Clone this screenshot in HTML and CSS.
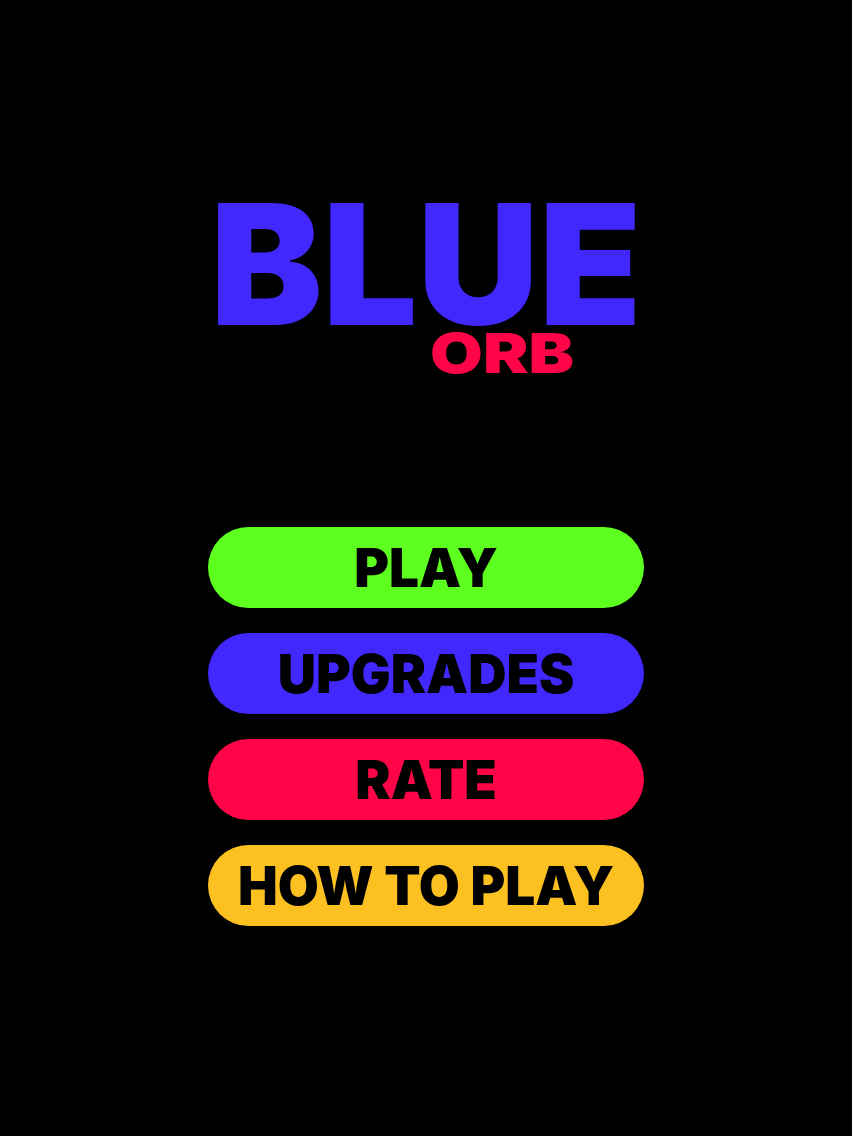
FILE: index.html
```html
<!DOCTYPE html>
<html lang="en">
<head>
<meta charset="utf-8">
<title>Blue Orb</title>
<link rel="stylesheet" href="styles.css">
</head>
<body>
<main class="screen">
  <h1 class="title">
    <span class="title-main">BLUE</span>
    <span class="title-sub">ORB</span>
  </h1>
  <nav class="menu">
    <button class="btn btn-play">PLAY</button>
    <button class="btn btn-upgrades">UPGRADES</button>
    <button class="btn btn-rate">RATE</button>
    <button class="btn btn-how">HOW TO PLAY</button>
  </nav>
</main>
</body>
</html>
```
FILE: styles.css
```css
html, body {
  margin: 0;
  padding: 0;
  background: #000;
}
body {
  width: 852px;
  height: 1136px;
  overflow: hidden;
  font-family: Inter, "Liberation Sans", sans-serif;
}
.screen {
  display: flex;
  flex-direction: column;
  align-items: center;
  padding-top: 189px;
}
.title {
  margin: 0;
  display: flex;
  flex-direction: column;
  align-items: flex-start;
  font-weight: 900;
}
.title-main {
  font-size: 168px;
  line-height: 150px;
  color: #4128ff;
  letter-spacing: 0;
}
.title-sub {
  display: inline-block;
  font-size: 55px;
  line-height: 28px;
  color: #ff0547;
  margin-left: 220px;
  letter-spacing: 0;
  transform: scaleX(1.24);
  transform-origin: left center;
}
.menu {
  margin-top: 160px;
  width: 436px;
  display: flex;
  flex-direction: column;
  gap: 25px;
}
.btn {
  height: 81px;
  border: none;
  border-radius: 41px;
  padding: 0;
  font-family: Inter, "Liberation Sans", sans-serif;
  font-weight: 900;
  font-size: 53px;
  letter-spacing: 0;
  color: #000;
  display: flex;
  align-items: center;
  justify-content: center;
}
.btn-play { background: #5dff1e; }
.btn-upgrades { background: #4128ff; }
.btn-rate { background: #ff0547; }
.btn-how { background: #fcc121; }
```
